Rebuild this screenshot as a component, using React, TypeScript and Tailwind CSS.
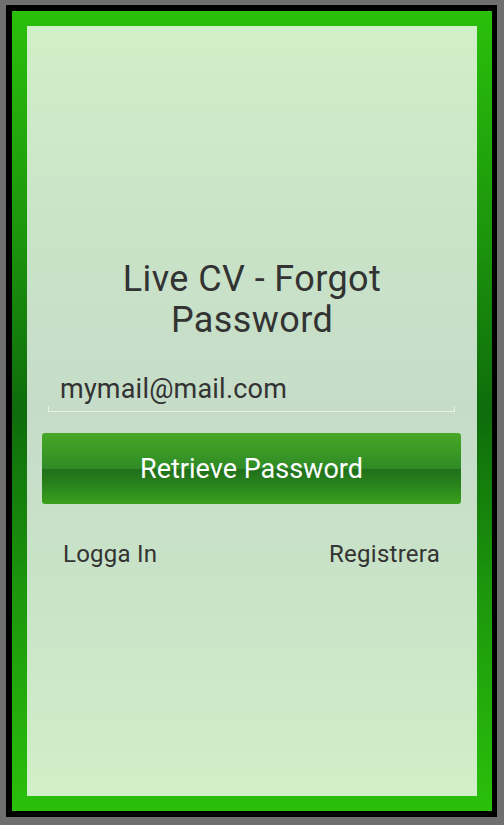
import React from "react";

const font = { fontFamily: "Roboto, 'Noto Sans', sans-serif" };

export default function App() {
  return (
    <div
      className="w-[504px] h-[825px] bg-[#6f6f6f] pt-[5px] pl-[6px] pr-[7px] pb-[8px]"
      style={font}
    >
      <div className="h-full w-full bg-black pt-[6px] pl-[6px] pr-[5px] pb-[6px]">
        <div className="h-full w-full p-[15px] bg-[linear-gradient(to_bottom,#2ac00b_0%,#1c950c_28%,#0e6c0b_50%,#1c950c_72%,#2ac00b_100%)]">
          <div className="h-full w-full flex flex-col pt-[233px] bg-[linear-gradient(to_bottom,#d1efc8_0%,#c9e4c8_25%,#c6dcc8_50%,#c9e4c8_75%,#d1efc8_100%)]">
            <h1 className="text-[36px] leading-[41px] tracking-[0.4px] text-center text-[#333333] font-normal">
              Live CV - Forgot
              <br />
              Password
            </h1>

            <div className="relative mt-[32px] ml-[21px] w-[407px] pl-[12px] pb-[6px] border-b border-[#e8f1e5]">
              <span className="block text-[27px] leading-[32px] tracking-[0.2px] text-[#333333]">
                mymail@mail.com
              </span>
              <span className="absolute left-0 bottom-0 h-[5px] w-px bg-[#e8f1e5]" />
              <span className="absolute right-0 bottom-0 h-[5px] w-px bg-[#e8f1e5]" />
            </div>

            <button className="mt-[21px] ml-[15px] w-[419px] h-[71px] rounded-[3px] text-white text-[27px] leading-[32px] bg-[linear-gradient(to_bottom,#47a825_0%,#2f8b26_50%,#216f1b_51%,#2a861c_75%,#3aa01d_100%)]">
              Retrieve Password
            </button>

            <div className="mt-[36px] flex justify-between pl-[36px] pr-[37px] text-[24px] leading-[28px] tracking-[0.25px] text-[#333333]">
              <span>Logga In</span>
              <span>Registrera</span>
            </div>
          </div>
        </div>
      </div>
    </div>
  );
}
